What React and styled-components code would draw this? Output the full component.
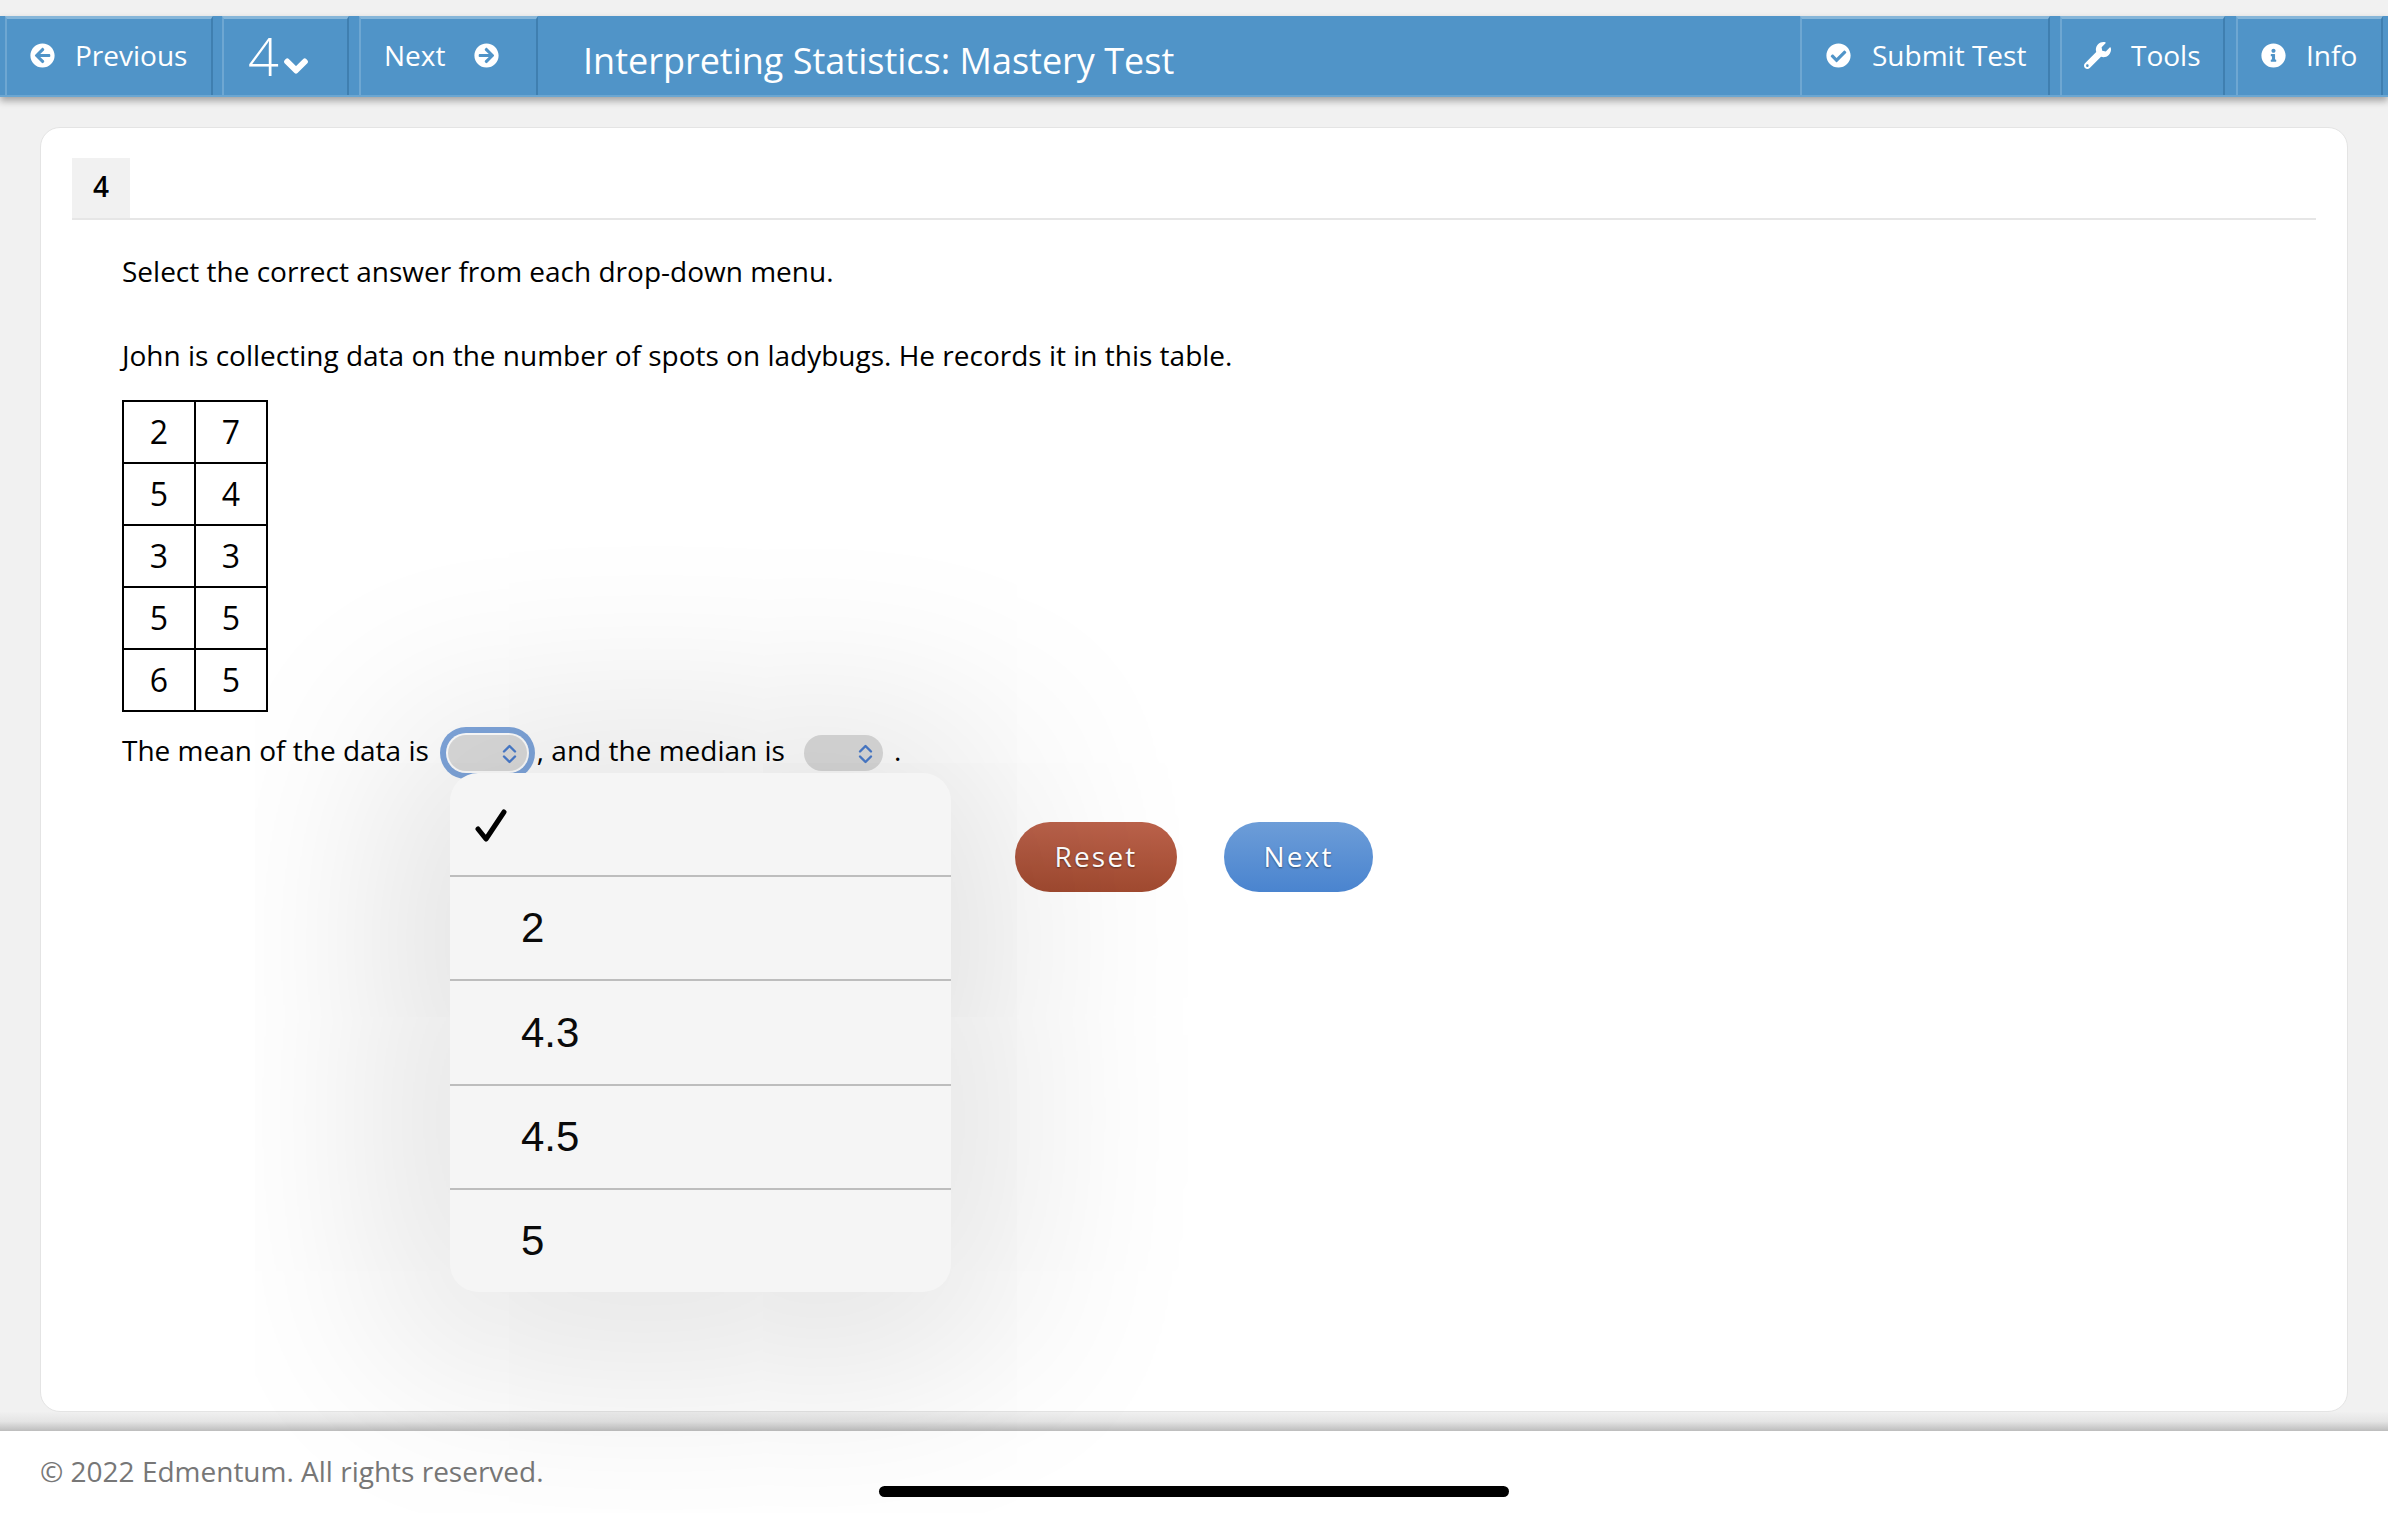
import React from "react";
import styled, { createGlobalStyle } from "styled-components";
import { FaArrowCircleLeft, FaArrowCircleRight, FaCheckCircle, FaWrench, FaInfoCircle, FaChevronDown } from "react-icons/fa";

const Global = createGlobalStyle`
  html, body { margin: 0; padding: 0; background: #f1f1f1; }
  body { font-family: "Open Sans", "Liberation Sans", sans-serif; color: #000; overflow: hidden; }
`;
const Page = styled.div`
  width: 2388px; height: 1513px; display: flex; flex-direction: column; padding-top: 16px; box-sizing: border-box; position: relative; overflow: hidden;
`;
const Header = styled.header`
  height: 81px; flex: none; display: flex; background: #5094c8; box-sizing: border-box;
  border-bottom: 2px solid #6aa6d2; box-shadow: 0 4px 7px rgba(0,0,0,.32); position: relative; z-index: 2; padding-left: 5px; padding-right: 5px; color: #fff;
`;
const Seg = styled.div`
  width: ${p => p.$w}px; flex: none; display: flex; align-items: center; gap: ${p => p.$gap ?? 20}px; box-sizing: border-box;
  padding-left: ${p => p.$pl}px; padding-bottom: 4px; margin-left: ${p => p.$ml ?? 0}px; font-size: 28px;
  border-top: 3px solid #86b6d9; border-left: 2px solid #6ea7d2; border-right: 2px solid #3f7fb0; height: 79px;
  svg { flex: none; }
`;
const Big = styled.span` font-size: 54px; font-weight: 300; line-height: 1; `;
const Caret = styled(FaChevronDown)` stroke: currentColor; stroke-width: 36px; margin-top: 22px; `;
const Title = styled.div`
  flex: 1; font-size: 36px; padding-left: 45px; display: flex; align-items: center; padding-top: 10px;
`;
const Main = styled.main`
  flex: 1; min-height: 0; padding: 30px 40px 19px;
`;
const Card = styled.div`
  height: 100%; box-sizing: border-box; background: #fff; border: 1px solid #e4e4e4; border-radius: 20px; padding: 30px 31px 0;
`;
const TabBar = styled.div` border-bottom: 2px solid #e6e6e6; height: 62px; box-sizing: border-box; `;
const Tab = styled.div`
  width: 58px; height: 60px; background: #f1f1f1; display: flex; align-items: center; justify-content: center; font-size: 28px; font-weight: 600; padding-bottom: 4px; box-sizing: border-box;
`;
const Content = styled.div` padding: 29px 50px 0; font-size: 28px; line-height: 44px; `;
const Para = styled.p` margin: 0 0 40px; `;
const Table = styled.table`
  border-collapse: collapse; margin: -17px 0 16px; font-size: 32px;
  td { border: 2px solid #000; width: 70px; height: 60px; padding: 0; text-align: center; }
`;
const Sentence = styled.div` display: flex; align-items: center; height: 44px; position: relative; `;
const SelectBox = styled.span`
  width: 79px; height: 36px; flex: none; border-radius: 18px; background: #dcdcdc; position: relative; top: 3px; margin-left: ${p => p.$ml}px; margin-right: ${p => p.$mr}px; display: block;
  ${p => p.$focus && `box-shadow: 0 0 0 2px #fff, 0 0 0 8px #7fa6dc;`}
  svg { position: absolute; right: 10px; top: 9px; }
`;
const Menu = styled.div`
  position: absolute; left: 328px; top: 45px; width: 501px; height: 519px; background: #f5f5f5; border-radius: 28px; z-index: 5;
  box-shadow: 0 10px 200px 60px rgba(0,0,0,.12); display: flex; flex-direction: column;
`;
const MenuRow = styled.div`
  flex: 1; display: flex; align-items: center; padding-left: 71px; font-family: "Liberation Sans", Arial, sans-serif; font-size: 42px; color: #0a0a0a; position: relative;
  & + & { border-top: 2px solid #bdbdbd; }
  svg { position: absolute; left: 25px; top: 36px; }
`;
const Actions = styled.div` display: flex; gap: 47px; position: absolute; left: 893px; top: 94px; `;
const Pill = styled.button`
  height: 70px; width: ${p => p.$w}px; border: 0; border-radius: 35px; color: #fff; font: 500 28px "Open Sans", sans-serif; letter-spacing: 2.2px; padding: 0 0 3px;
  background: linear-gradient(${p => p.$top}, ${p => p.$bottom}); text-shadow: 0 1px 2px rgba(0,0,0,.45);
`;
const Footer = styled.footer`
  height: 82px; flex: none; background: #fff; box-sizing: border-box; padding: 22px 40px 0; font-size: 28px; line-height: 36px; color: #777; position: relative;
  &::before { content: ""; position: absolute; left: 0; right: 0; top: -19px; height: 19px; background: linear-gradient(#f0f0f0, #e4e4e4 50%, #bdbdbd); }
`;
const HomeBar = styled.div`
  position: absolute; left: 879px; top: 1486px; width: 630px; height: 11px; border-radius: 6px; background: #000; z-index: 6;
`;

const UpDown = () => (
  <svg width="15" height="20" viewBox="0 0 15 20" fill="none" stroke="#4a7ccc" strokeWidth="2.4" strokeLinecap="round" strokeLinejoin="round">
    <path d="M2 7.5 7.5 2 13 7.5M2 12.5 7.5 18 13 12.5" />
  </svg>
);
const Check = () => (
  <svg width="32" height="33" viewBox="0 0 32 33" fill="none" stroke="#000" strokeWidth="5" strokeLinecap="round" strokeLinejoin="round">
    <path d="M3 20 11 30 29 3" />
  </svg>
);

const rows = [[2, 7], [5, 4], [3, 3], [5, 5], [6, 5]];
const options = ["2", "4.3", "4.5", "5"];

export default function App() {
  return (
    <Page>
      <Global />
      <Header>
        <Seg $w={208} $pl={23}><FaArrowCircleLeft size={25} />Previous</Seg>
        <Seg $w={127} $pl={24} $ml={9} $gap={4}><Big>4</Big><Caret size={26} /></Seg>
        <Seg $w={179} $pl={23} $ml={10} $gap={29}>Next<FaArrowCircleRight size={25} /></Seg>
        <Title>Interpreting Statistics: Mastery Test</Title>
        <Seg $w={250} $pl={24} $gap={21}><FaCheckCircle size={25} />Submit Test</Seg>
        <Seg $w={165} $pl={22} $ml={10}><FaWrench size={27} />Tools</Seg>
        <Seg $w={147} $pl={23} $ml={11}><FaInfoCircle size={25} />Info</Seg>
      </Header>
      <Main>
        <Card>
          <TabBar><Tab>4</Tab></TabBar>
          <Content>
            <Para>Select the correct answer from each drop-down menu.</Para>
            <Para>John is collecting data on the number of spots on ladybugs. He records it in this table.</Para>
            <Table><tbody>{rows.map((r, i) => <tr key={i}><td>{r[0]}</td><td>{r[1]}</td></tr>)}</tbody></Table>
            <Sentence>
              The mean of the data is
              <SelectBox $focus $ml={19} $mr={10}><UpDown /></SelectBox>
              , and the median is
              <SelectBox $ml={19} $mr={11}><UpDown /></SelectBox>
              .
              <Menu>
                <MenuRow><Check /></MenuRow>
                {options.map(o => <MenuRow key={o}>{o}</MenuRow>)}
              </Menu>
              <Actions>
                <Pill $w={162} $top="#bb624b" $bottom="#a14a30">Reset</Pill>
                <Pill $w={149} $top="#6d9dd8" $bottom="#4a84cf">Next</Pill>
              </Actions>
            </Sentence>
          </Content>
        </Card>
      </Main>
      <Footer>© 2022 Edmentum. All rights reserved.</Footer>
      <HomeBar />
    </Page>
  );
}
